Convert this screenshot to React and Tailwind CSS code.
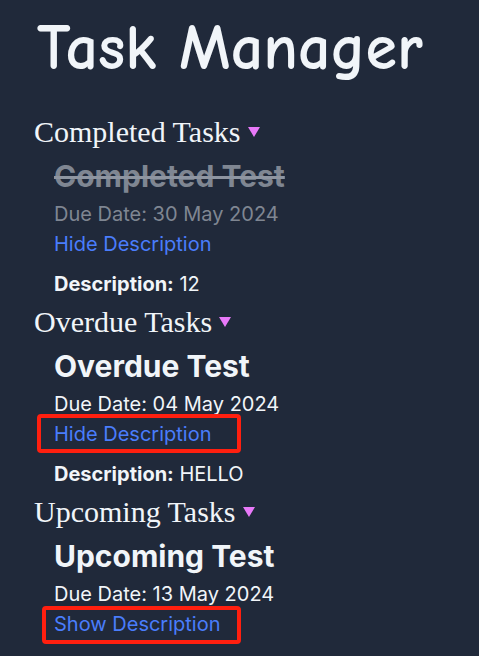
import { useState } from "react";

const sections = [
  {
    heading: "Completed Tasks",
    task: { title: "Completed Test", due: "30 May 2024", description: "12", completed: true },
    open: true,
    highlight: null,
  },
  {
    heading: "Overdue Tasks",
    task: { title: "Overdue Test", due: "04 May 2024", description: "HELLO" },
    open: true,
    highlight: "-left-[17px] -top-[6px] w-[204px] h-[39px]",
  },
  {
    heading: "Upcoming Tasks",
    task: { title: "Upcoming Test", due: "13 May 2024", description: "" },
    open: false,
    highlight: "-left-[12px] -top-[4px] w-[199px] h-[38px]",
  },
];

function Task({ task, initiallyOpen, highlight }) {
  const [open, setOpen] = useState(initiallyOpen);
  return (
    <article className="pl-5 text-xl">
      <div className={task.completed ? "text-[#7f8692]" : ""}>
        <h3
          className={`text-3xl/[44px] font-bold ${
            task.completed ? "line-through decoration-[#8e95a1] decoration-[3px]" : ""
          }`}
        >
          {task.title}
        </h3>
        <p className="leading-8">Due Date: {task.due}</p>
      </div>
      <div className="relative flex">
        <button
          type="button"
          aria-expanded={open}
          onClick={() => setOpen(!open)}
          className="cursor-pointer leading-7 text-[#4a7dfc]"
        >
          {open ? "Hide Description" : "Show Description"}
        </button>
        {highlight && (
          <span
            aria-hidden="true"
            className={`pointer-events-none absolute rounded-sm border-4 border-[#ff1f0f] ${highlight}`}
          />
        )}
      </div>
      {open && (
        <p className="mt-[10px] leading-8">
          <strong className="font-bold">Description:</strong> {task.description}
        </p>
      )}
    </article>
  );
}

function Section({ heading, task, open, highlight }) {
  const [expanded, setExpanded] = useState(true);
  return (
    <section>
      <h2 className="font-['Times_New_Roman','Liberation_Serif',serif] text-3xl/[44px]">
        <button
          type="button"
          aria-expanded={expanded}
          onClick={() => setExpanded(!expanded)}
          className="flex cursor-pointer items-center gap-[7px]"
        >
          {heading}
          <svg viewBox="0 0 12 10" className="h-[10px] w-3 fill-[#e879f9]" aria-hidden="true">
            <path d="M0 0H12L6 10Z" />
          </svg>
        </button>
      </h2>
      {expanded && <Task task={task} initiallyOpen={open} highlight={highlight} />}
    </section>
  );
}

export default function App() {
  return (
    <main className="min-h-screen bg-[#20293a] px-[34px] font-['Inter',sans-serif] text-slate-100">
      <h1 className="pb-[14px] pl-[3px] font-['Comic_Sans_MS','Comic_Neue','Lato',sans-serif] text-[64px]/[96px] font-bold whitespace-nowrap">
        Task Manager
      </h1>
      {sections.map((section) => (
        <Section key={section.heading} {...section} />
      ))}
    </main>
  );
}
